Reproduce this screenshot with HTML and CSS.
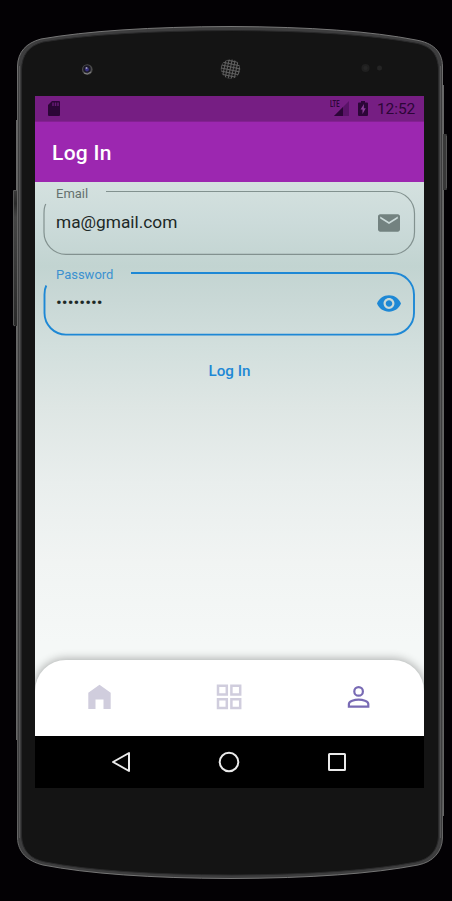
FILE: index.html
```html
<!DOCTYPE html>
<html lang="en">
<head>
<meta charset="utf-8">
<title>Log In</title>
<link rel="stylesheet" href="styles.css">
</head>
<body>
<div class="device">
  <svg class="shell" viewBox="0 0 452 901" aria-hidden="true">
    <defs>
      <linearGradient id="edge" x1="0" x2="0" y1="0" y2="1">
        <stop offset="0" stop-color="#777"/><stop offset=".1" stop-color="#666"/><stop offset=".9" stop-color="#555"/><stop offset="1" stop-color="#777"/>
      </linearGradient>
      <linearGradient id="key" x1="0" x2="0" y1="0" y2="1">
        <stop offset="0" stop-color="#3c3c3c"/><stop offset=".1" stop-color="#292929"/><stop offset=".2" stop-color="#444"/><stop offset="1" stop-color="#292929"/>
      </linearGradient>
      <pattern id="mesh" width="3" height="3" patternUnits="userSpaceOnUse" patternTransform="rotate(12)">
        <rect width="3" height="3" fill="#606060"/><rect width="2" height="2" fill="#171717"/>
      </pattern>
    </defs>
    <path d="M16.5 120V740M443.5 85V816" stroke="#666" fill="none"/>
    <rect x="13" y="190" width="5" height="136" rx="1" fill="url(#key)"/>
    <path d="M13.500 190.500H17M13.500 191V325L15 326" stroke="#555" fill="none"/>
    <rect x="442" y="134" width="5" height="56" rx="1" fill="#393939"/>
    <path d="M446.500 136V188" stroke="#565656"/>
    <path d="M17.500 66C18 52 26 43 41 39Q110 27 231 26.500Q350 27 416 40C433 43 442 51 442.500 66V838C442 852 433 862 418 865Q350 878 231 878.500Q110 878 43 865C27 861 18 852 17.500 838Z" fill="#3d3d3e" stroke="url(#edge)"/>
    <path d="M21.500 70C22 54 29 46 43 42Q110 31 231 30.500Q350 31 415 43C431 46 438 54 438.500 70V836C438 850 430 859 416 862Q350 874.500 231 875Q110 874.500 45 862C30 859 22 850 21.500 836Z" fill="#141414" stroke="#29292a"/>
    <path d="M19.500 66V838M440.500 66V838" stroke="#565657"/>
    <circle cx="87.300" cy="69.500" r="5.300" fill="#4b4b4b"/>
    <circle cx="87" cy="69" r="3.800" fill="#1b1928"/>
    <circle cx="87" cy="69.500" r="1.900" fill="#373083"/>
    <circle cx="86.500" cy="68" r="1" fill="#a29fbc"/>
    <path d="M84 73Q87 75.500 91 72" stroke="#888" fill="none"/>
    <circle cx="230.500" cy="69" r="9.800" fill="url(#mesh)"/>
    <circle cx="365.500" cy="68" r="4" fill="#202020"/><circle cx="365.500" cy="68" r="2" fill="#262626"/>
    <circle cx="379.500" cy="68" r="2.500" fill="#242424"/>
  </svg>
  <main class="screen">
    <div class="status">
      <svg class="sd" viewBox="0 0 12 15"><path d="M4 0H11Q12 0 12 1V14Q12 15 11 15H1Q0 15 0 14V4Z" fill="#2c0637"/><path d="M5 1.500V5M7.500 1.500V5M10 1.500V5" stroke="#651a74" stroke-width="1.500"/></svg>
      <div class="signal">
        <span class="lte">LTE</span>
        <svg viewBox="0 0 15 15"><path d="M0 15L15 0V15Z" fill="#5a1368"/><path d="M0 15L9 6V15Z" fill="#2c0637"/></svg>
      </div>
      <svg class="battery" viewBox="0 0 10 15"><path d="M3 0H7V1.500H9Q10 1.500 10 2.500V14Q10 15 9 15H1Q0 15 0 14V2.500Q0 1.500 1 1.500H3Z" fill="#2c0637"/><path d="M6 3L2.500 8.500H4.500V13L7.800 7.300H5.800Z" fill="#8a3a98"/></svg>
      <span class="clock">12:52</span>
    </div>
    <header class="appbar"><h1>Log In</h1></header>
    <section class="content">
      <div class="field">
        <svg class="outline" viewBox="0 0 389 72"><path d="M71 9.500H357.500A22 22 0 0 1 379.500 31.500V50.300A22 22 0 0 1 357.500 72.300H31A22 22 0 0 1 9 50.300V31.500Q9 25 10.800 22" fill="none" stroke="#82918f" stroke-width="1.200"/></svg>
        <span class="label">Email</span>
        <span class="value">ma@gmail.com</span>
        <svg class="icon mail" viewBox="2 4 20 16"><path d="M20 4H4c-1.100 0-2 .9-2 2v12c0 1.100.9 2 2 2h16c1.100 0 2-.9 2-2V6c0-1.100-.9-2-2-2zm0 4-8 5-8-5V6l8 5 8-5z" fill="#738280"/></svg>
      </div>
      <div class="field active">
        <svg class="outline" viewBox="0 0 389 72"><path d="M96 10H357.500A21.500 21.500 0 0 1 379 31.500V50A21.500 21.500 0 0 1 357.500 71.600H31A21.500 21.500 0 0 1 9.500 50V31.500Q9.500 26 11.300 22.500" fill="none" stroke="#1e88d5" stroke-width="1.900"/></svg>
        <span class="label">Password</span>
        <span class="value dots">••••••••</span>
        <svg class="icon eye" viewBox="1 4.500 22 15"><path d="M12 4.500C7 4.500 2.730 7.610 1 12c1.730 4.390 6 7.500 11 7.500s9.270-3.110 11-7.500c-1.730-4.390-6-7.500-11-7.500zM12 17c-2.760 0-5-2.240-5-5s2.240-5 5-5 5 2.240 5 5-2.240 5-5 5zm0-8c-1.660 0-3 1.340-3 3s1.340 3 3 3 3-1.340 3-3-1.340-3-3-3z" fill="#1e88d5"/></svg>
      </div>
      <button class="login">Log In</button>
    </section>
    <nav class="tabs">
      <svg viewBox="0 0 26 26"><path d="M12.500 .8L23.700 8.800V25H16.500V15.500H8.500V25H1.300V8.800Z" fill="#d0cddd"/></svg>
      <svg viewBox="0 0 26 26"><path d="M2 1.800h8.800v8.800H2zM15.400 1.800h8.800v8.800h-8.800zM2 15.200h8.800V24H2zM15.400 15.200h8.800V24h-8.800z" fill="none" stroke="#d0cddd" stroke-width="2.500"/></svg>
      <svg viewBox="0 0 26 26"><circle cx="12.600" cy="7.400" r="4.300" fill="none" stroke="#786ab4" stroke-width="2.200"/><path d="M2.900 22.600V20C2.900 17 8.600 15.600 12.600 15.600S22.300 17 22.300 20V22.600Z" fill="none" stroke="#786ab4" stroke-width="2.200"/></svg>
    </nav>
    <div class="system">
      <svg viewBox="0 0 22 22"><path d="M19 2V20L3 11Z" fill="none" stroke="#eaeaea" stroke-width="2" stroke-linejoin="round"/></svg>
      <svg viewBox="0 0 22 22"><circle cx="11" cy="11" r="9.300" fill="none" stroke="#eaeaea" stroke-width="2"/></svg>
      <svg viewBox="0 0 22 22"><rect x="3" y="3" width="16" height="16" rx=".5" fill="none" stroke="#eaeaea" stroke-width="2"/></svg>
    </div>
  </main>
</div>
</body>
</html>
```
FILE: styles.css
```css
* { box-sizing: border-box; }
body { margin: 0; background: #030104; font-family: Roboto, "Liberation Sans", sans-serif; }
svg { display: block; }
.device { position: relative; width: 452px; height: 901px; padding: 96px 28px 113px 35px; overflow: hidden; }
.shell { position: absolute; inset: 0; width: 452px; height: 901px; }
.screen { position: relative; width: 389px; height: 692px; display: flex; flex-direction: column; overflow: hidden; background: #f5f8f7; }
.status { height: 26px; flex: none; background: #761e83; border-bottom: 1px solid #842092; color: #2c0637; display: flex; align-items: center; padding: 0 9px 0 13px; }
.sd { width: 12px; height: 15px; }
.signal { display: flex; margin-left: auto; width: 19px; height: 15px; justify-content: flex-end; position: relative; }
.signal svg { width: 15px; height: 15px; }
.lte { position: absolute; left: 0; top: -1px; font-size: 9px; line-height: 9px; font-weight: 700; transform: scaleX(.65); transform-origin: left; background: #761e83; }
.battery { width: 10px; height: 15px; margin: 0 9px 0 9px; }
.clock { font-size: 15.5px; line-height: 20px; width: 38px; white-space: nowrap; letter-spacing: -.1px; margin-top: 1px; }
.appbar { height: 60px; flex: none; background: #9c27b0; padding: 0 17px; display: flex; align-items: center; }
h1 { margin: 2px 0 0; color: #fff; font-size: 21px; line-height: 26px; font-weight: 500; letter-spacing: .3px; }
.content { height: 554px; flex: none; margin-bottom: -76px; background: linear-gradient(#d4e1df 0, #ccdbda 40px, #c2d4d1 84px, #c9d8d6 118px, #d2dfdd 165px, #dee6e4 225px, #e9eeed 300px, #f1f4f3 380px, #f5f8f7 460px, #f5f8f7 100%); }
.field { position: relative; height: 81px; padding: 4px 23px 0 21px; display: grid; grid-template-columns: 1fr 24px; grid-template-rows: 15px 42px; }
.outline { position: absolute; left: 0; top: 0; width: 389px; height: 72px; overflow: visible; }
.label { grid-column: 1 / 3; font-size: 13px; line-height: 15px; color: #65716f; }
.value { font-size: 17.3px; line-height: 20px; margin-top: 11px; color: #1d2927; }
.active .label { color: #3b91d0; }
.dots { font-size: 17.3px; letter-spacing: 0; margin-top: 10px; }
.icon { align-self: start; }
.mail { width: 22px; height: 18px; margin: 13px 0 0 1px; }
.eye { width: 24px; height: 17px; margin-top: 13px; }
.login { display: block; margin: 17px auto 0; border: 0; padding: 0; background: none; color: #1e88d5; font: 500 15.2px/20px Roboto, sans-serif; }
.tabs { position: relative; height: 76px; flex: none; background: #fff; border-radius: 31px 31px 0 0; box-shadow: 0 0 10px 1px rgba(0,0,0,.32); display: grid; grid-template-columns: repeat(3, 1fr); justify-items: center; padding-top: 24px; }
.tabs svg { width: 26px; height: 26px; }
.system { position: relative; height: 52px; flex: none; background: #000; display: flex; justify-content: center; gap: 86px; padding: 15px 1px 0 0; }
.system svg { width: 22px; height: 22px; }
```
